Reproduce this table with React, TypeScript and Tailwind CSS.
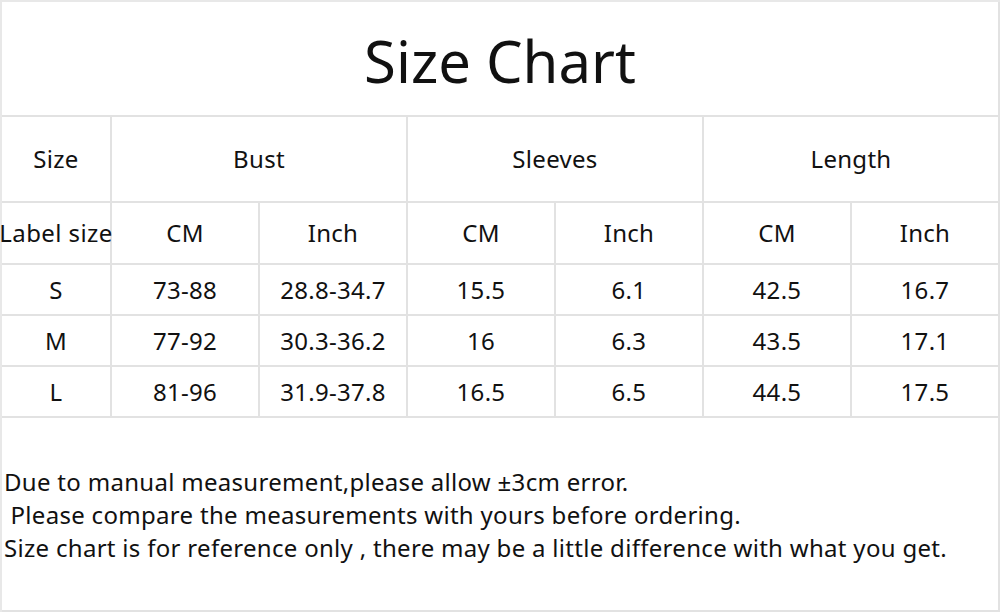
const header2 = ['Label size', 'CM', 'Inch', 'CM', 'Inch', 'CM', 'Inch'];

const rows = [
  ['S', '73-88', '28.8-34.7', '15.5', '6.1', '42.5', '16.7'],
  ['M', '77-92', '30.3-36.2', '16', '6.3', '43.5', '17.1'],
  ['L', '81-96', '31.9-37.8', '16.5', '6.5', '44.5', '17.5'],
];

const cell = 'flex items-center justify-center border-r-2 border-b-2 border-[#e2e2e2]';

export default function App() {
  return (
    <div
      className="w-[1001px] h-[614px] bg-white text-[#111] overflow-hidden"
      style={{ fontFamily: '"Noto Sans", "Open Sans", sans-serif' }}
    >
      <div className="w-[1000px] border-l-2 border-t-2 border-[#e8e8e8]">
        {/* Title */}
        <div className="h-[115px] flex items-center justify-center border-r-2 border-b-2 border-[#e2e2e2]">
          <h1 className="text-[58px] leading-none pt-[4px]">Size Chart</h1>
        </div>

        {/* Table */}
        <div className="grid grid-cols-[110px_repeat(6,148px)] text-[24px] tracking-[0.3px]">
          <div className={`${cell} h-[86px]`}>Size</div>
          <div className={`${cell} h-[86px] col-span-2`}>Bust</div>
          <div className={`${cell} h-[86px] col-span-2`}>Sleeves</div>
          <div className={`${cell} h-[86px] col-span-2`}>Length</div>

          {header2.map((h, i) => (
            <div key={i} className={`${cell} h-[62px] ${i === 0 ? 'whitespace-nowrap tracking-[0.4px]' : ''}`}>
              {h}
            </div>
          ))}

          {rows.map(r =>
            r.map((v, i) => (
              <div key={r[0] + i} className={`${cell} h-[51px]`}>
                {v}
              </div>
            ))
          )}
        </div>

        {/* Notes */}
        <div className="h-[194px] border-r-2 border-b-2 border-[#e2e2e2] pt-[47px] pl-[2px] text-[24px] tracking-[0.3px] leading-[33px] whitespace-pre">
          <p>Due to manual measurement,please allow ±3cm error.</p>
          <p> Please compare the measurements with yours before ordering.</p>
          <p>Size chart is for reference only , there may be a little difference with what you get.</p>
        </div>
      </div>
    </div>
  );
}
